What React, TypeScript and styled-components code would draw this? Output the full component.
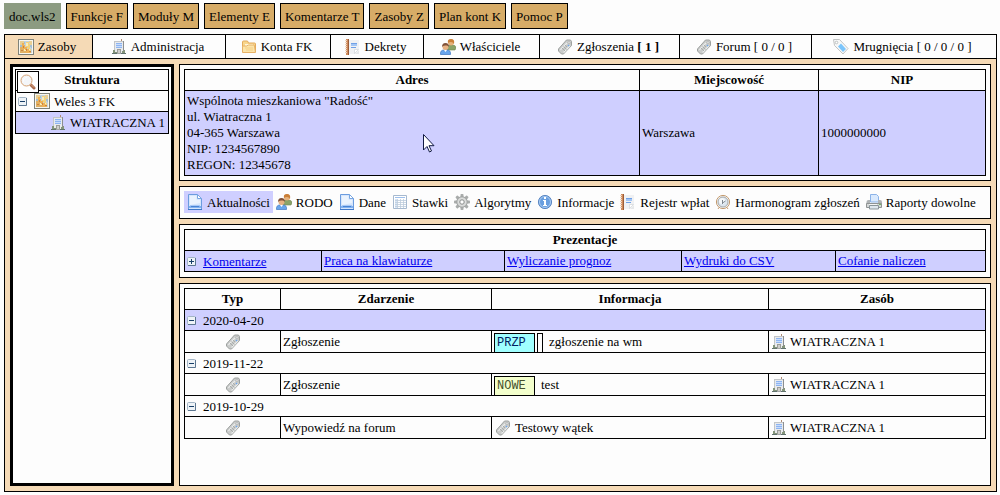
import React from "react";
import styled, { createGlobalStyle, css } from "styled-components";

const peach = "#f5dab6";
const lavender = "#cfcfff";

const Global = createGlobalStyle`
  *, *::before, *::after { box-sizing: border-box; }
  body {
    margin: 0;
    background: #fdfdfd;
    color: #000;
    font: 13px/16px "Liberation Serif", "Times New Roman", serif;
  }
  button { font: inherit; color: inherit; margin: 0; cursor: pointer; }
  svg { display: block; flex: none; }
`;

const Page = styled.div`
  min-height: 100vh;
  display: flex;
  flex-direction: column;
  gap: 5px;
  padding: 3px 3px 3px 4px;
`;

const MenuBar = styled.nav`
  display: flex;
  flex-wrap: wrap;
  gap: 5px;
`;

const MenuButton = styled.button<{ $plain?: boolean }>`
  height: 26px;
  padding: 2px 4px 0;
  border: 1px solid ${(p) => (p.$plain ? "#8c9b81" : "#000")};
  background: ${(p) => (p.$plain ? "#8c9b81" : "#d7ac67")};
  white-space: nowrap;
`;

const Frame = styled.div`
  flex: 1;
  display: flex;
  flex-direction: column;
  border: 1px solid #000;
  background: ${peach};
`;

const Tabs = styled.nav`
  display: flex;
  border-bottom: 1px solid #000;
`;

const Tab = styled.button<{ $grow: number; $active?: boolean }>`
  flex: ${(p) => p.$grow} 1 0;
  height: 23px;
  display: flex;
  align-items: center;
  justify-content: center;
  gap: 4px;
  padding: 0;
  border: 0;
  border-right: 1px solid #000;
  background: ${(p) => (p.$active ? peach : "#fdfdfd")};
  white-space: nowrap;
  &:last-child { border-right: 0; }
`;

const TabContent = styled.span`
  display: flex;
  align-items: center;
  gap: 4px;
  margin-right: 3px;
`;

const Content = styled.div`
  flex: 1;
  display: flex;
  gap: 5px;
  padding: 5px;
`;

const Sidebar = styled.aside`
  flex: none;
  width: 164px;
  padding: 2px;
  border: 3px solid #000;
  background: #fdfdfd;
`;

const Main = styled.main`
  flex: 1;
  min-width: 0;
  display: flex;
  flex-direction: column;
  gap: 5px;
`;

const Panel = styled.section<{ $fill?: boolean; $loose?: boolean }>`
  padding: 4px 4px ${(p) => (p.$loose ? 5 : 4)}px;
  border: 1px solid #000;
  background: #fdfdfd;
  ${(p) => p.$fill && css`flex: 1;`}
`;

const Table = styled.table`
  width: 100%;
  border-collapse: collapse;
  table-layout: fixed;
`;

const Col = styled.col<{ $w: number }>`
  width: ${(p) => p.$w}px;
`;

const Row = styled.tr<{ $tinted?: boolean; $tall?: boolean }>`
  height: ${(p) => (p.$tall ? 22 : 21)}px;
  background: ${(p) => (p.$tinted ? lavender : "transparent")};
`;

const Th = styled.th`
  position: relative;
  padding: 0 2px;
  border: 1px solid #000;
`;

const Td = styled.td`
  padding: 0 2px;
  border: 1px solid #000;
  white-space: nowrap;
`;

const AddressTd = styled(Td)`
  padding: 2px;
`;

const Line = styled.div<{ $indent?: number; $center?: boolean; $gap?: number }>`
  display: flex;
  align-items: center;
  justify-content: ${(p) => (p.$center ? "center" : "flex-start")};
  gap: ${(p) => p.$gap ?? 4}px;
  padding-left: ${(p) => p.$indent ?? 0}px;
`;

const Label = styled.span`
  padding-top: 2px;
`;

const BadgeLine = styled(Line)`
  height: 21px;
  padding-top: 2px;
  align-items: stretch;
  gap: 2px;
`;

const Badge = styled.span<{ $bg: string; $ink: string }>`
  width: 41px;
  padding: 0 2px;
  border: 1px solid #000;
  border-bottom: 0;
  background: ${(p) => p.$bg};
  color: ${(p) => p.$ink};
  font: 12px/18px "Liberation Mono", "Courier New", monospace;
`;

const EmptyBadge = styled.span`
  width: 6px;
  border: 1px solid #000;
  border-bottom: 0;
`;

const BadgeText = styled.span`
  padding-left: 4px;
  line-height: 18px;
`;

const SearchButton = styled.button`
  position: absolute;
  top: 1px;
  left: 1px;
  width: 22px;
  height: 22px;
  padding: 2px;
  border: 1px solid #000;
  background: #fff;
`;

const ToggleButton = styled.button`
  padding: 0;
  border: 0;
  background: none;
`;

const ToolBar = styled.nav`
  display: flex;
`;

const Tool = styled.button<{ $active?: boolean }>`
  display: flex;
  align-items: center;
  gap: 4px;
  height: 22px;
  padding: 0 3px;
  border: 0;
  background: ${(p) => (p.$active ? lavender : "transparent")};
  white-space: nowrap;
`;

const Link = styled.a`
  color: #0000ee;
  text-decoration: underline;
`;

const Pointer = styled.svg`
  position: absolute;
  left: 423px;
  top: 134px;
  pointer-events: none;
`;

const Svg = ({ children }: { children: React.ReactNode }) => (
  <svg width="16" height="16" viewBox="0 0 16 16" aria-hidden="true">
    {children}
  </svg>
);

const FlameIcon = () => (
  <Svg>
    <rect x=".5" y=".5" width="15" height="15" fill="#f8f6ee" stroke="#80837a" />
    <rect x="2" y="2" width="12" height="12" fill="#c3d3de" />
    <path d="M2 2h4v2H4v2H2zM11 2h3v4h-2V4h-1z" fill="#e9cf94" />
    <path d="M8 3h3v2h1v5h1v2h-3V9H8z" fill="#f3d27c" />
    <path d="M4 4h2v2h1v2h2v2h2v2h2v2H7v-2H6v-2H4z" fill="#eeb156" />
    <path d="M2 8h2v2h2v2h2v2H2z" fill="#dfb064" />
    <path d="M8 4h2v3H8zM6 10h1v1h1v1H6zM11 10h1v1h-1z" fill="#fbeeb8" />
    <path d="M5 7h1v2H5zM8 10h1v2H8zM3 11h2v1H3zM11 12h2v1h-2z" fill="#cb8340" />
    <path d="M2 6h2v2H2zM12 6h2v3h-1V8h-1zM6 3h1v2H6z" fill="#a3bfd4" />
  </Svg>
);

const BuildingIcon = () => (
  <Svg>
    <path d="M10 0h1v3h-1z" fill="#b08a74" />
    <path d="M3 2h9v12H3z" fill="#e9ebed" />
    <path d="M3 2h9v1H3zM3 3h1v9H3z" fill="#c2c5c8" />
    <path d="M12 2h1v11h-1z" fill="#8b8e91" />
    <path d="M5 4h6v5H5z" fill="#c9dcfb" />
    <path d="M5 4h6v1H5zM5 6h6v1H5zM5 8h6v1H5z" fill="#8db4f1" />
    <path d="M6 10h4v4H6z" fill="#9b9d9a" />
    <path d="M7 11h2v3H7z" fill="#cfcfcc" />
    <path d="M2 11h2v2h2v2H2zM11 12h2v-1h1v4h-3z" fill="#84957a" />
    <path d="M1 14h5v1H1zM10 14h5v1h-5z" fill="#62736f" />
    <path d="M6 14h4v1H6z" fill="#a5a8a6" />
  </Svg>
);

const FolderIcon = () => (
  <Svg>
    <path d="M1.500 13V3q0-1 1-1h4l1 2h6q1 0 1 1v8" fill="#f8d68c" stroke="#e3aa5c" />
    <path d="M4 5h8v5H4z" fill="#fff7de" />
    <path d="M1.500 13.500V8q0-1 1-1h3l2-1h5q1 0 1 1l1 6.500z" fill="#fbe4a9" stroke="#e8b266" />
    <path d="M4 9h8M5 11h7" stroke="#f6cf85" />
  </Svg>
);

const NotebookIcon = () => (
  <Svg>
    <path d="M4 1h10v9l-4 5H4z" fill="#f0f1f3" />
    <path d="M9.500 14.500v-4h4z" fill="#fff" stroke="#cbd0d4" strokeWidth=".6" />
    <path d="M10 15l4-4v4z" fill="#e6e8ea" />
    <path d="M1 0h3v16H1z" fill="#cf8b5c" />
    <path d="M3 0h1v16H3z" fill="#9c5c38" />
    <path d="M0 1h2v1H0zM0 3h2v1H0zM0 5h2v1H0zM0 7h2v1H0zM0 9h2v1H0zM0 11h2v1H0zM0 13h2v1H0z" fill="#ecd3bf" />
    <path d="M6 4h6v1H6zM6 8h5v1H6z" fill="#6fa0e6" />
    <path d="M6 5h6v2H6z" fill="#a3c6f5" />
  </Svg>
);

const PeopleIcon = () => (
  <Svg>
    <path d="M7 11V8q0-2 3-2h2q4 0 4 3l-1 2z" fill="#8aa368" stroke="#6f8653" strokeWidth=".6" />
    <circle cx="11" cy="3.500" r="3" fill="#e6b27b" />
    <path d="M8 4Q7 0 11 0t3 5q-1-2-3-2T8 4z" fill="#ca7f38" />
    <path d="M.5 15.500Q0 11 4 11h3q4 0 3.500 4.500z" fill="#68a5ec" stroke="#3f77c0" strokeWidth=".7" />
    <path d="M4 11h3l-1.500 2z" fill="#fff" />
    <circle cx="5.500" cy="8" r="3" fill="#e6b182" />
    <path d="M2 8q0-4 3.500-4T9 8Q8 6 6 6.500 3 6 2 8z" fill="#80523a" />
  </Svg>
);

const TagIcon = () => (
  <Svg>
    <path d="M1.500 10L9.500 1h4l1 1.500v4L6.500 15H4.500l-3-3z" fill="#c9cbca" stroke="#9da19f" />
    <path d="M3 10.500l6.500-7 1 .8-6.700 7zM6.200 13l6.300-6.500.8.8L7 14z" fill="#eceeed" />
    <path d="M5 9l3 3M6.500 7.500l3 3M8 6l2 2" stroke="#a9adab" />
    <circle cx="12" cy="3.700" r="1" fill="#fff" stroke="#9ca09f" strokeWidth=".6" />
    <path d="M10.500 6.500l1 1 1-1-1-1z" fill="#6ea7ee" />
  </Svg>
);

const BlueTagIcon = () => (
  <Svg>
    <path d="M.5.500h6L15 9.500l-5 5.500L1.500 6.500z" fill="#f7f8f8" stroke="#c2c4c4" />
    <circle cx="3.500" cy="3.500" r="1.300" fill="#fff" stroke="#a9adad" strokeWidth=".7" />
    <path d="M8 4.500l5 5.500-3 3-5-5.500z" fill="#7cc5fb" />
  </Svg>
);

const PageIcon = () => (
  <Svg>
    <path d="M1.500.500h9l4 4v11h-13z" fill="#d6e6fc" stroke="#6b9cdf" />
    <path d="M3 2h6.500v4H13v3L3 11z" fill="#eaf3fe" />
    <path d="M10.500.500v4h4z" fill="#fff" stroke="#79a7e2" />
    <path d="M3 11h10v1H3z" fill="#a9caf7" />
    <path d="M2 12h12v2H2z" fill="#7fb1f0" />
    <path d="M4 12h8v1H4z" fill="#4a84d4" />
    <path d="M1 15h14v1H1z" fill="#3e78c9" />
  </Svg>
);

const GridIcon = () => (
  <Svg>
    <path d="M1.500 1.500h13v13h-13z" fill="#fff" stroke="#a6b9cf" />
    <path d="M3 3h10v1H3z" fill="#9dbfec" />
    <path d="M3 5h2v9H3z" fill="#d7e5f6" />
    <path d="M3 6.500h11M3 8.500h11M3 10.500h11M3 12.500h11M5.500 5v9M8.500 5v9M11.500 5v9" stroke="#bdcbdc" strokeWidth=".8" />
  </Svg>
);

const GearIcon = () => (
  <Svg>
    <g fill="#a9acab">
      {[0, 45, 90, 135].map((a) => (
        <rect key={a} x="6.500" y="0" width="3" height="16" rx=".8" transform={`rotate(${a} 8 8)`} />
      ))}
    </g>
    <circle cx="8" cy="8" r="5.300" fill="#cfd1d0" stroke="#a0a3a2" />
    <circle cx="8" cy="8" r="3.600" fill="none" stroke="#dfe0df" />
    <circle cx="8" cy="8" r="2.200" fill="#fff" stroke="#8e9190" />
  </Svg>
);

const InfoIcon = () => (
  <Svg>
    <circle cx="8" cy="8" r="6.600" fill="#6a9fdf" stroke="#5d88c2" />
    <circle cx="8" cy="8" r="5.500" fill="none" stroke="#a9cbf3" />
    <path d="M7 3h2v2H7zM6 6h3v5h1v1H6v-1h1V7H6z" fill="#fff" />
  </Svg>
);

const ClockIcon = () => (
  <Svg>
    <circle cx="8" cy="8" r="6.600" fill="#f4f5f5" stroke="#c49a6e" />
    <circle cx="8" cy="8" r="5" fill="#dce6ef" stroke="#a5a8a9" />
    <circle cx="7" cy="7" r="3" fill="#fff" opacity=".7" />
    <path d="M7.500 6v4M7.500 9l3-2" stroke="#7d868e" fill="none" />
    <path d="M4 13.500l-1 1.500M12 13.500l1 1.500" stroke="#c49a6e" />
  </Svg>
);

const PrinterIcon = () => (
  <Svg>
    <path d="M4.500 8V.500h6l2 2V8z" fill="#d9e9fd" stroke="#8bb3e8" />
    <path d="M.5 13V8q0-2 2-2H4v3h8V6h2q2 0 2 2v5z" fill="#b0b4b6" />
    <path d="M.5 9.500h15v4H.5z" fill="#d4d7d7" stroke="#909494" />
    <path d="M3.500 11.500h9v3.500h-9z" fill="#dfe7ee" stroke="#8b969b" />
    <path d="M3 10h8v1H3z" fill="#f4f5f5" />
    <path d="M13 10h2v1h-2z" fill="#72bc62" />
  </Svg>
);

const SearchIcon = () => (
  <Svg>
    <path d="M11 11l3 3" stroke="#a7674a" strokeWidth="3" strokeLinecap="round" />
    <path d="M11 10.500l3 3" stroke="#e0ab84" />
    <circle cx="6.500" cy="6.500" r="5.500" fill="#f4f6f9" stroke="#d6a273" />
    <path d="M3.500 7.500a3.500 3.500 0 0 1 3.500-4" fill="none" stroke="#fff" />
  </Svg>
);

const Toggle = ({ plus }: { plus?: boolean }) => (
  <ToggleButton aria-label={plus ? "Rozwiń" : "Zwiń"}>
    <svg width="9" height="9" viewBox="0 0 9 9" aria-hidden="true">
      <rect x=".5" y=".5" width="8" height="8" rx="1" fill="#eef3f7" stroke="#a3b5c6" />
      <path d="M8.500 1v7.500H1" fill="none" stroke="#5c7690" />
      <path d={plus ? "M2 4.500h5M4.500 2v5" : "M2 4.500h5"} stroke="#183f68" />
    </svg>
  </ToggleButton>
);

const menu = ["Funkcje F", "Moduły M", "Elementy E", "Komentarze T", "Zasoby Z", "Plan kont K", "Pomoc P"];

const tabs = [
  { label: "Zasoby", icon: <FlameIcon />, grow: 87, active: true },
  { label: "Administracja", icon: <BuildingIcon />, grow: 132 },
  { label: "Konta FK", icon: <FolderIcon />, grow: 104 },
  { label: "Dekrety", icon: <NotebookIcon />, grow: 92 },
  { label: "Właściciele", icon: <PeopleIcon />, grow: 115 },
  { label: <span>Zgłoszenia <b>[ 1 ]</b></span>, icon: <TagIcon />, grow: 139 },
  { label: "Forum [ 0 / 0 ]", icon: <TagIcon />, grow: 131 },
  { label: "Mrugnięcia [ 0 / 0 / 0 ]", icon: <BlueTagIcon />, grow: 184 },
];

const tools = [
  { label: "Aktualności", icon: <PageIcon />, active: true },
  { label: "RODO", icon: <PeopleIcon /> },
  { label: "Dane", icon: <PageIcon /> },
  { label: "Stawki", icon: <GridIcon /> },
  { label: "Algorytmy", icon: <GearIcon /> },
  { label: "Informacje", icon: <InfoIcon /> },
  { label: "Rejestr wpłat", icon: <NotebookIcon /> },
  { label: "Harmonogram zgłoszeń", icon: <ClockIcon /> },
  { label: "Raporty dowolne", icon: <PrinterIcon /> },
];

const address = [
  'Wspólnota mieszkaniowa "Radość"',
  "ul. Wiatraczna 1",
  "04-365 Warszawa",
  "NIP: 1234567890",
  "REGON: 12345678",
];

const events = [
  {
    date: "2020-04-20",
    tinted: true,
    kind: "Zgłoszenie",
    info: (
      <BadgeLine>
        <Badge $bg="#a0ffff" $ink="#002060">PRZP</Badge>
        <EmptyBadge />
        <BadgeText>zgłoszenie na wm</BadgeText>
      </BadgeLine>
    ),
  },
  {
    date: "2019-11-22",
    kind: "Zgłoszenie",
    info: (
      <BadgeLine>
        <Badge $bg="#f3ffcc" $ink="#45502c">NOWE</Badge>
        <BadgeText>test</BadgeText>
      </BadgeLine>
    ),
  },
  {
    date: "2019-10-29",
    kind: "Wypowiedź na forum",
    info: <Line $indent={1}><TagIcon />Testowy wątek</Line>,
  },
];

const Columns = ({ widths }: { widths: number[] }) => (
  <colgroup>
    {widths.map((w, i) => <Col key={i} $w={w} />)}
  </colgroup>
);

export default function App() {
  return (
    <>
      <Global />
      <Page>
        <MenuBar>
          <MenuButton $plain>doc.wls2</MenuButton>
          {menu.map((m) => <MenuButton key={m}>{m}</MenuButton>)}
        </MenuBar>
        <Frame>
          <Tabs>
            {tabs.map((t, i) => (
              <Tab key={i} $grow={t.grow} $active={t.active}>
                <TabContent>{t.icon}{t.label}</TabContent>
              </Tab>
            ))}
          </Tabs>
          <Content>
            <Sidebar>
              <Table>
                <thead>
                  <Row>
                    <Th>
                      <SearchButton aria-label="Szukaj"><SearchIcon /></SearchButton>
                      Struktura
                    </Th>
                  </Row>
                </thead>
                <tbody>
                  <Row><Td><Line><Toggle /><Line $indent={3}><FlameIcon /><Label>Weles 3 FK</Label></Line></Line></Td></Row>
                  <Row $tinted $tall><Td><Line $indent={32}><BuildingIcon />WIATRACZNA 1</Line></Td></Row>
                </tbody>
              </Table>
            </Sidebar>
            <Main>
              <Panel>
                <Table>
                  <Columns widths={[455, 179, 167]} />
                  <thead>
                    <Row><Th>Adres</Th><Th>Miejscowość</Th><Th>NIP</Th></Row>
                  </thead>
                  <tbody>
                    <Row $tinted>
                      <AddressTd>{address.map((a) => <div key={a}>{a}</div>)}</AddressTd>
                      <Td>Warszawa</Td>
                      <Td>1000000000</Td>
                    </Row>
                  </tbody>
                </Table>
              </Panel>
              <Panel $loose>
                <ToolBar>
                  {tools.map((t) => (
                    <Tool key={t.label} $active={t.active}>{t.icon}<Label>{t.label}</Label></Tool>
                  ))}
                </ToolBar>
              </Panel>
              <Panel $loose>
                <Table>
                  <Columns widths={[137, 183, 177, 154, 150]} />
                  <thead>
                    <Row><Th colSpan={5}>Prezentacje</Th></Row>
                  </thead>
                  <tbody>
                    <Row $tinted>
                      <Td><Line $gap={7}><Toggle plus /><Label><Link href="#komentarze">Komentarze</Link></Label></Line></Td>
                      <Td><Link href="#klawiatura">Praca na klawiaturze</Link></Td>
                      <Td><Link href="#prognozy">Wyliczanie prognoz</Link></Td>
                      <Td><Link href="#csv">Wydruki do CSV</Link></Td>
                      <Td><Link href="#cofanie">Cofanie naliczen</Link></Td>
                    </Row>
                  </tbody>
                </Table>
              </Panel>
              <Panel $fill>
                <Table>
                  <Columns widths={[96, 211, 277, 217]} />
                  <thead>
                    <Row><Th>Typ</Th><Th>Zdarzenie</Th><Th>Informacja</Th><Th>Zasób</Th></Row>
                  </thead>
                  <tbody>
                    {events.map((e) => (
                      <React.Fragment key={e.date}>
                        <Row $tinted={e.tinted}>
                          <Td colSpan={4}><Line $gap={7}><Toggle /><Label>{e.date}</Label></Line></Td>
                        </Row>
                        <Row $tall>
                          <Td><Line $center><TagIcon /></Line></Td>
                          <Td>{e.kind}</Td>
                          <Td>{e.info}</Td>
                          <Td><Line $gap={3}><BuildingIcon />WIATRACZNA 1</Line></Td>
                        </Row>
                      </React.Fragment>
                    ))}
                  </tbody>
                </Table>
              </Panel>
            </Main>
          </Content>
        </Frame>
      </Page>
      <Pointer width="12" height="19" viewBox="0 0 12 19" aria-hidden="true">
        <path d="M.5.500v15.500l3.500-3.500 2.500 5.500 2-1-2.500-5.300h5z" fill="#fff" stroke="#111a44" />
      </Pointer>
    </>
  );
}
